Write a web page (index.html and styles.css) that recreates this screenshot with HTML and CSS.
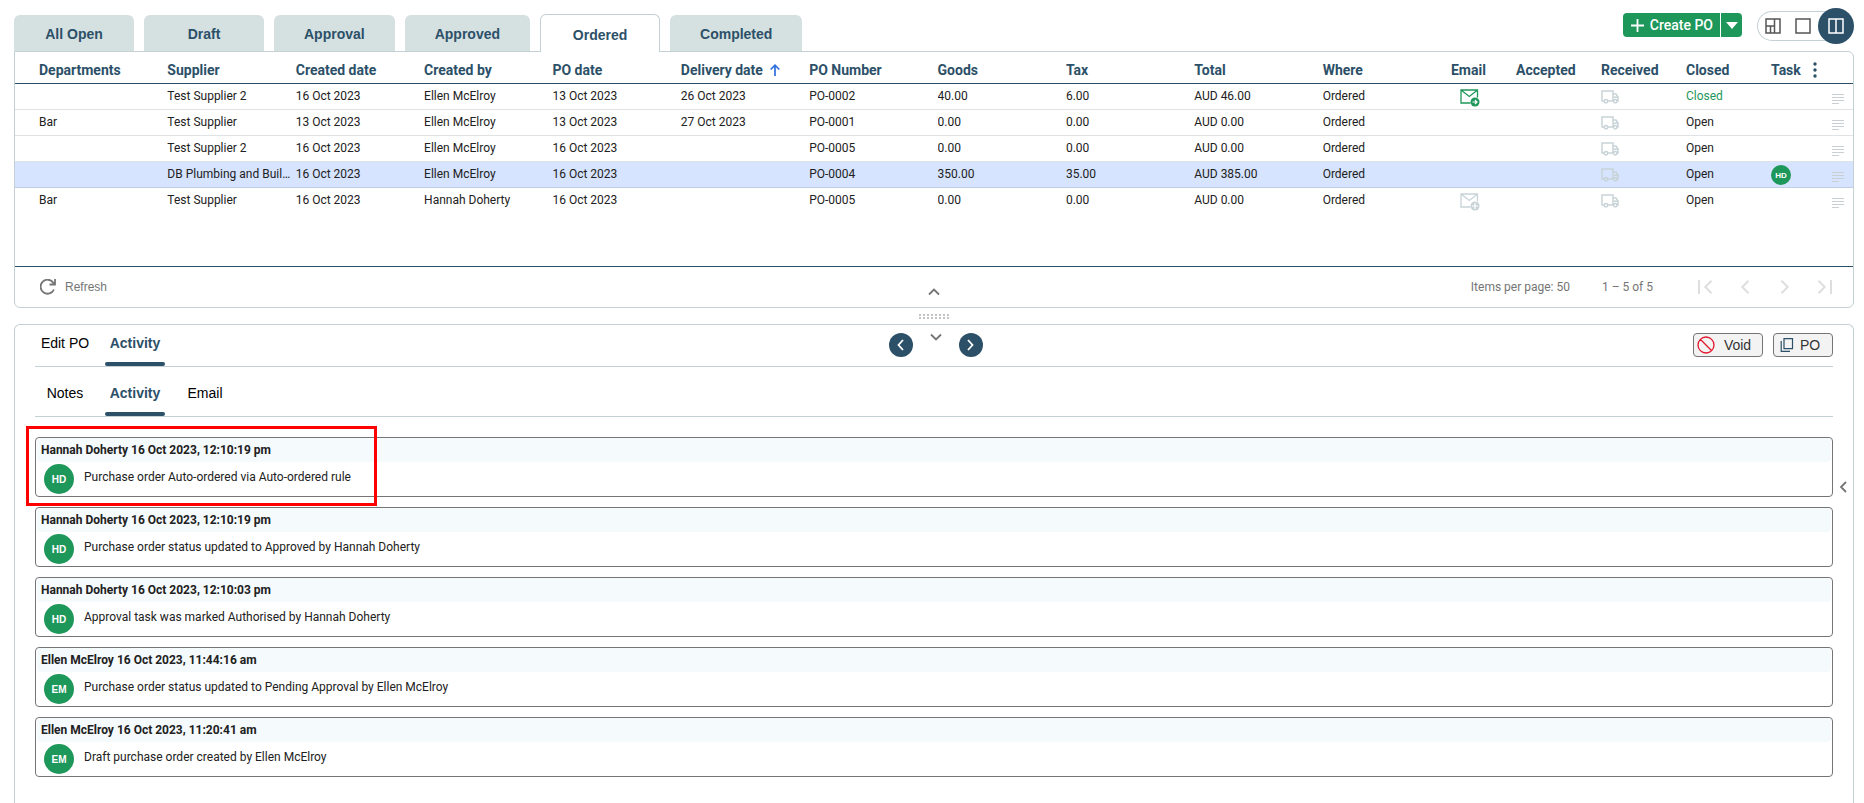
FILE: index.html
```html
<!DOCTYPE html>
<html lang="en">
<head>
  <meta charset="UTF-8">
  <meta name="viewport" content="width=device-width, initial-scale=1.0">
  <title>Purchase Orders</title>
  <link rel="stylesheet" href="styles.css">
</head>
<body>
  <svg class="sprite" aria-hidden="true">
    <symbol id="truck" viewBox="0 0 18 14">
      <path d="M3 11H1V1h11v10H7M12 4h3l2 3v4h-1M12 11h1" fill="none" stroke="currentColor" stroke-width="1.500"/>
      <circle cx="5" cy="11.300" r="1.700" fill="none" stroke="currentColor" stroke-width="1.500"/>
      <circle cx="14.300" cy="11.300" r="1.700" fill="none" stroke="currentColor" stroke-width="1.500"/>
      <path d="M12.500 7.200h4.600" fill="none" stroke="currentColor" stroke-width="1.500"/>
    </symbol>
    <symbol id="mail" viewBox="0 0 20 18">
      <path d="M10.500 14H1V1h16.500v7.500M1 1l8.300 6.500L17.500 1" fill="none" stroke="currentColor" stroke-width="1.300"/>
      <circle cx="15" cy="13" r="4.500" fill="currentColor"/>
    </symbol>
    <symbol id="lines" viewBox="0 0 12 12">
      <path d="M0 1.500h12M0 4.500h12M0 7.500h12M0 10.500h7" fill="none" stroke="currentColor"/>
    </symbol>
    <symbol id="chevron" viewBox="0 0 12 8">
      <path d="M1 6.500L6 1.500l5 5" fill="none" stroke="currentColor" stroke-width="1.800"/>
    </symbol>
  </svg>

  <header class="topbar">
    <div class="tabs" role="tablist">
      <button class="tab" role="tab">All Open</button>
      <button class="tab" role="tab">Draft</button>
      <button class="tab" role="tab">Approval</button>
      <button class="tab" role="tab">Approved</button>
      <button class="tab active" role="tab" aria-selected="true">Ordered</button>
      <button class="tab" role="tab">Completed</button>
    </div>
    <div class="actions">
      <div class="create">
        <button class="create-main">
          <svg width="13" height="13" viewBox="0 0 13 13"><path d="M6.500 0v13M0 6.500h13" stroke="#fff" stroke-width="1.800"/></svg>
          Create PO
        </button>
        <button class="create-more" aria-label="More create options">
          <svg width="12" height="7" viewBox="0 0 12 7"><path d="M0 0h12L6 7z" fill="#fff"/></svg>
        </button>
      </div>
      <div class="views">
        <button aria-label="Grid view">
          <svg width="16" height="16" viewBox="0 0 16 16"><path d="M1 1h14v14H1zM9.500 1v14M1 8h8.500M5.500 8v7" fill="none" stroke="currentColor" stroke-width="1.500"/></svg>
        </button>
        <button aria-label="Single view">
          <svg width="16" height="16" viewBox="0 0 16 16"><path d="M1 1h14v14H1z" fill="none" stroke="currentColor" stroke-width="1.500"/></svg>
        </button>
        <button class="active" aria-label="Split view">
          <svg width="16" height="16" viewBox="0 0 16 16"><path d="M1 1h14v14H1zM8 1v14" fill="none" stroke="currentColor" stroke-width="1.500"/></svg>
        </button>
      </div>
    </div>
  </header>

  <section class="panel orders">
    <table>
      <thead>
        <tr>
          <th>Departments</th>
          <th>Supplier</th>
          <th>Created date</th>
          <th>Created by</th>
          <th>PO date</th>
          <th>Delivery date <svg class="sort" width="10" height="12" viewBox="0 0 10 12"><path d="M5 12V1.500M.7 5.500L5 1.200l4.300 4.300" fill="none" stroke="currentColor" stroke-width="1.700"/></svg></th>
          <th>PO Number</th>
          <th>Goods</th>
          <th>Tax</th>
          <th>Total</th>
          <th>Where</th>
          <th>Email</th>
          <th>Accepted</th>
          <th>Received</th>
          <th>Closed</th>
          <th>Task</th>
          <th>
            <button class="icon-btn columns-menu" aria-label="Columns">
              <svg width="4" height="16" viewBox="0 0 4 16"><g fill="currentColor"><circle cx="2" cy="2" r="1.700"/><circle cx="2" cy="8" r="1.700"/><circle cx="2" cy="14" r="1.700"/></g></svg>
            </button>
          </th>
        </tr>
      </thead>
      <tbody>
        <tr>
          <td></td>
          <td>Test Supplier 2</td>
          <td>16 Oct 2023</td>
          <td>Ellen McElroy</td>
          <td>13 Oct 2023</td>
          <td>26 Oct 2023</td>
          <td>PO-0002</td>
          <td>40.00</td>
          <td>6.00</td>
          <td>AUD 46.00</td>
          <td>Ordered</td>
          <td class="mail sent"><svg width="20" height="18" viewBox="0 0 20 18"><use href="#mail"/><path d="M12.500 13h4M15 11l2 2-2 2" fill="none" stroke="#fff" stroke-width="1.200"/></svg></td>
          <td></td>
          <td class="received"><svg width="18" height="14"><use href="#truck"/></svg></td>
          <td class="closed">Closed</td>
          <td></td>
          <td class="row-menu"><button class="icon-btn" aria-label="Details"><svg width="12" height="12"><use href="#lines"/></svg></button></td>
        </tr>
        <tr>
          <td>Bar</td>
          <td>Test Supplier</td>
          <td>13 Oct 2023</td>
          <td>Ellen McElroy</td>
          <td>13 Oct 2023</td>
          <td>27 Oct 2023</td>
          <td>PO-0001</td>
          <td>0.00</td>
          <td>0.00</td>
          <td>AUD 0.00</td>
          <td>Ordered</td>
          <td></td>
          <td></td>
          <td class="received"><svg width="18" height="14"><use href="#truck"/></svg></td>
          <td>Open</td>
          <td></td>
          <td class="row-menu"><button class="icon-btn" aria-label="Details"><svg width="12" height="12"><use href="#lines"/></svg></button></td>
        </tr>
        <tr>
          <td></td>
          <td>Test Supplier 2</td>
          <td>16 Oct 2023</td>
          <td>Ellen McElroy</td>
          <td>16 Oct 2023</td>
          <td></td>
          <td>PO-0005</td>
          <td>0.00</td>
          <td>0.00</td>
          <td>AUD 0.00</td>
          <td>Ordered</td>
          <td></td>
          <td></td>
          <td class="received"><svg width="18" height="14"><use href="#truck"/></svg></td>
          <td>Open</td>
          <td></td>
          <td class="row-menu"><button class="icon-btn" aria-label="Details"><svg width="12" height="12"><use href="#lines"/></svg></button></td>
        </tr>
        <tr class="selected">
          <td></td>
          <td>DB Plumbing and Buil…</td>
          <td>16 Oct 2023</td>
          <td>Ellen McElroy</td>
          <td>16 Oct 2023</td>
          <td></td>
          <td>PO-0004</td>
          <td>350.00</td>
          <td>35.00</td>
          <td>AUD 385.00</td>
          <td>Ordered</td>
          <td></td>
          <td></td>
          <td class="received"><svg width="18" height="14"><use href="#truck"/></svg></td>
          <td>Open</td>
          <td class="task"><span class="avatar small">HD</span></td>
          <td class="row-menu"><button class="icon-btn" aria-label="Details"><svg width="12" height="12"><use href="#lines"/></svg></button></td>
        </tr>
        <tr>
          <td>Bar</td>
          <td>Test Supplier</td>
          <td>16 Oct 2023</td>
          <td>Hannah Doherty</td>
          <td>16 Oct 2023</td>
          <td></td>
          <td>PO-0005</td>
          <td>0.00</td>
          <td>0.00</td>
          <td>AUD 0.00</td>
          <td>Ordered</td>
          <td class="mail"><svg width="20" height="18" viewBox="0 0 20 18"><use href="#mail"/><path d="M12 13h6M15 10v6" fill="none" stroke="#fff" stroke-width="1.200"/></svg></td>
          <td></td>
          <td class="received"><svg width="18" height="14"><use href="#truck"/></svg></td>
          <td>Open</td>
          <td></td>
          <td class="row-menu"><button class="icon-btn" aria-label="Details"><svg width="12" height="12"><use href="#lines"/></svg></button></td>
        </tr>
      </tbody>
    </table>

    <footer class="orders-footer">
      <button class="refresh">
        <svg width="16" height="16" viewBox="0 0 16 16"><path d="M14 10.500A7 7 0 1 1 13.300 3.700L15 5.500M15 0v5.500H9.500" fill="none" stroke="currentColor" stroke-width="1.800"/></svg>
        Refresh
      </button>
      <button class="icon-btn collapse" aria-label="Collapse list"><svg width="12" height="8"><use href="#chevron"/></svg></button>
      <div class="pager">
        <span>Items per page: 50</span>
        <span class="range">1 – 5 of 5</span>
        <button aria-label="First page" disabled><svg width="16" height="14" viewBox="0 0 16 14"><path d="M2 0v14M14.500 .8L8.300 7l6.200 6.200" fill="none" stroke="currentColor" stroke-width="2"/></svg></button>
        <button aria-label="Previous page" disabled><svg width="10" height="14" viewBox="0 0 10 14"><path d="M8.500 .8L2.300 7l6.200 6.200" fill="none" stroke="currentColor" stroke-width="2"/></svg></button>
        <button aria-label="Next page" disabled><svg width="10" height="14" viewBox="0 0 10 14"><path d="M1.500 .8L7.700 7l-6.200 6.200" fill="none" stroke="currentColor" stroke-width="2"/></svg></button>
        <button aria-label="Last page" disabled><svg width="16" height="14" viewBox="0 0 16 14"><path d="M14 0v14M1.500 .8L7.700 7l-6.200 6.200" fill="none" stroke="currentColor" stroke-width="2"/></svg></button>
      </div>
    </footer>
  </section>

  <div class="splitter" role="separator">
    <svg width="30" height="5" viewBox="0 0 30 5"><path d="M0 1h30M0 4h30" stroke="#c4c4c4" stroke-width="2" stroke-dasharray="2"/></svg>
  </div>

  <section class="panel detail">
    <div class="detail-main">
      <div class="detail-bar">
        <div class="line-tabs" role="tablist">
          <button class="line-tab" role="tab">Edit PO</button>
          <button class="line-tab active" role="tab" aria-selected="true">Activity</button>
        </div>
        <div class="record-nav">
          <button class="round" aria-label="Previous order"><svg width="7" height="12" viewBox="0 0 7 12"><path d="M6 1L1.500 6 6 11" fill="none" stroke="#fff" stroke-width="1.800"/></svg></button>
          <button class="icon-btn expand" aria-label="Expand list"><svg class="flip" width="12" height="8"><use href="#chevron"/></svg></button>
          <button class="round" aria-label="Next order"><svg width="7" height="12" viewBox="0 0 7 12"><path d="M1 1l4.500 5L1 11" fill="none" stroke="#fff" stroke-width="1.800"/></svg></button>
        </div>
        <div class="record-actions">
          <button class="outlined void">
            <svg width="18" height="18" viewBox="0 0 18 18"><path d="M9 1a8 8 0 1 0 0 16A8 8 0 1 0 9 1zM3.300 3.300l11.400 11.400" fill="none" stroke="#e3172d" stroke-width="1.300"/></svg>
            Void
          </button>
          <button class="outlined po">
            <svg width="14" height="14" viewBox="0 0 14 14"><path d="M4 .7h8.500v10H4zM1.200 3v10.300H10" fill="none" stroke="#2c5068" stroke-width="1.200"/></svg>
            PO
          </button>
        </div>
      </div>

      <div class="line-tabs sub-tabs" role="tablist">
        <button class="line-tab" role="tab">Notes</button>
        <button class="line-tab active" role="tab" aria-selected="true">Activity</button>
        <button class="line-tab" role="tab">Email</button>
      </div>

      <div class="feed">
        <article class="entry marked">
          <h3>Hannah Doherty 16 Oct 2023, 12:10:19 pm</h3>
          <div class="entry-body"><span class="avatar">HD</span><p>Purchase order Auto-ordered via Auto-ordered rule</p></div>
        </article>
        <article class="entry">
          <h3>Hannah Doherty 16 Oct 2023, 12:10:19 pm</h3>
          <div class="entry-body"><span class="avatar">HD</span><p>Purchase order status updated to Approved by Hannah Doherty</p></div>
        </article>
        <article class="entry">
          <h3>Hannah Doherty 16 Oct 2023, 12:10:03 pm</h3>
          <div class="entry-body"><span class="avatar">HD</span><p>Approval task was marked Authorised by Hannah Doherty</p></div>
        </article>
        <article class="entry">
          <h3>Ellen McElroy 16 Oct 2023, 11:44:16 am</h3>
          <div class="entry-body"><span class="avatar">EM</span><p>Purchase order status updated to Pending Approval by Ellen McElroy</p></div>
        </article>
        <article class="entry">
          <h3>Ellen McElroy 16 Oct 2023, 11:20:41 am</h3>
          <div class="entry-body"><span class="avatar">EM</span><p>Draft purchase order created by Ellen McElroy</p></div>
        </article>
      </div>
    </div>
    <button class="icon-btn side-toggle" aria-label="Open side panel"><svg width="8" height="12" viewBox="0 0 8 12"><path d="M7 1L2 6l5 5" fill="none" stroke="currentColor" stroke-width="1.800"/></svg></button>
  </section>
</body>
</html>
```
FILE: styles.css
```css
*,
*::after {
  box-sizing: border-box;
}
body {
  display: flex;
  flex-direction: column;
  height: 100vh;
  margin: 0;
  padding: 0 10px 0 14px;
  overflow: hidden;
  background: #fff;
  color: #212121;
  font-family: Roboto, sans-serif;
  font-size: 12px;
}
button {
  display: flex;
  align-items: center;
  justify-content: center;
  margin: 0;
  padding: 0;
  border: none;
  background: none;
  color: inherit;
  font-family: "Liberation Sans", Arial, sans-serif;
  font-size: 14px;
  cursor: pointer;
}
svg {
  display: block;
  flex: none;
}
.sprite {
  position: absolute;
  width: 0;
  height: 0;
}
.icon-btn {
  color: #757575;
}

/* top bar */
.topbar {
  display: flex;
  justify-content: space-between;
  align-items: flex-end;
  height: 51px;
}
.tabs {
  display: flex;
  align-items: flex-end;
  gap: 10px;
}
.tab {
  min-width: 120px;
  height: 36px;
  padding: 2px 30px 0;
  border-radius: 6px 6px 0 0;
  background: #d5e0e1;
  color: #2c5068;
  font-weight: bold;
}
.tab.active {
  height: 38px;
  margin-bottom: -1px;
  border: 1px solid #c3d0d4;
  border-bottom: none;
  background: #fff;
  z-index: 1;
}
.actions {
  display: flex;
  align-items: flex-start;
  align-self: flex-start;
  gap: 15px;
  padding-top: 8px;
}
.create {
  display: flex;
  gap: 1px;
  height: 24px;
  margin-top: 5px;
}
.create button {
  background: #1e975a;
  color: #fff;
}
.create .create-main {
  gap: 6px;
  padding: 0 7px 0 8px;
  border-radius: 4px 0 0 4px;
  font-family: Roboto, sans-serif;
  font-weight: 500;
}
.create .create-more {
  width: 21px;
  border-radius: 0 4px 4px 0;
}
.views {
  display: flex;
  align-items: center;
  gap: 14px;
  height: 30px;
  margin-top: 3px;
  padding-left: 7px;
  border: 1px solid #c3d0d4;
  border-right: none;
  border-radius: 15px;
  color: #555;
}
.views .active {
  width: 36px;
  height: 36px;
  margin-left: -7px;
  border-radius: 50%;
  background: #2c5068;
  color: #fff;
}

/* orders table */
.panel {
  border: 1px solid #c3d0d4;
  border-radius: 6px;
}
.orders {
  display: flex;
  flex-direction: column;
  height: 257px;
  border-top-left-radius: 0;
}
table,
thead,
tbody {
  display: block;
}
table {
  flex: 1;
}
tr {
  display: grid;
  grid-template-columns: repeat(11, minmax(0, 1fr)) 65px repeat(3, 85px) 40px 42px;
  padding-left: 24px;
}
thead tr {
  padding-top: 5px;
  border-bottom: 1px solid #2c5068;
}
th {
  display: flex;
  align-items: center;
  padding: 0;
  color: #2c5068;
  font-size: 14px;
  font-weight: bold;
  line-height: 26px;
  white-space: nowrap;
}
.sort {
  margin-left: 7px;
  color: #2f6fde;
}
.columns-menu {
  margin-left: 2px;
  color: #2c5068;
}
tbody tr {
  height: 26px;
  border-bottom: 1px solid #dfe3e5;
}
tbody tr:last-child {
  border-bottom: none;
}
tbody tr.selected {
  border-bottom-color: #c3cde3;
  background: #d6e4ff;
}
td {
  padding: 0 4px 0 0;
  overflow: hidden;
  line-height: 25px;
  text-overflow: ellipsis;
  white-space: nowrap;
}
td.closed {
  color: #1e975a;
}
td.mail {
  padding: 5px 0 0 9px;
  color: #c8d3d8;
}
td.sent {
  color: #1e975a;
}
td.received {
  padding-top: 6px;
  color: #c8d3d8;
}
td.task {
  padding-top: 3px;
}
td.row-menu {
  padding: 9px 0 0 21px;
}
.row-menu .icon-btn {
  color: #c8d0d4;
}

.orders-footer {
  display: grid;
  grid-template-columns: 1fr auto 1fr;
  align-items: center;
  height: 41px;
  padding: 0 8px;
  border-top: 1px solid #2c5068;
  color: #757575;
}
.refresh {
  justify-self: start;
  gap: 9px;
  padding-left: 17px;
  font-size: 12px;
}
.collapse {
  padding-top: 10px;
}
.pager {
  display: flex;
  align-items: center;
  justify-self: end;
}
.pager button {
  width: 40px;
  height: 40px;
  color: #dedede;
}
.range {
  margin: 0 32px;
}

.splitter {
  display: flex;
  align-items: center;
  justify-content: center;
  height: 16px;
}

/* detail panel */
.detail {
  display: flex;
  flex: 1;
  padding-left: 20px;
  border-bottom: none;
  border-radius: 6px 6px 0 0;
}
.detail-main {
  flex: 1;
}
.detail-bar {
  display: grid;
  grid-template-columns: 1fr auto 1fr;
  border-bottom: 1px solid #c3d0d4;
}
.line-tabs {
  display: flex;
  gap: 10px;
}
.line-tab {
  flex-direction: column;
  min-width: 60px;
  padding-top: 8px;
  color: #000;
  line-height: 20px;
}
.line-tab::after {
  content: "";
  align-self: stretch;
  height: 4px;
  margin-top: 9px;
  border-radius: 2px;
}
.line-tab.active {
  color: #2c5068;
  font-weight: bold;
}
.line-tab.active::after {
  background: #2c5068;
}
.sub-tabs {
  padding-top: 8px;
  border-bottom: 1px solid #c3d0d4;
}
.record-nav,
.record-actions {
  display: flex;
  align-items: flex-start;
  padding-top: 8px;
}
.record-nav {
  gap: 17px;
  padding-left: 3px;
}
.round {
  width: 24px;
  height: 24px;
  border-radius: 50%;
  background: #2c5068;
}
.flip {
  transform: rotate(180deg);
}
.record-actions {
  justify-self: end;
  gap: 10px;
}
.outlined {
  height: 24px;
  border: 1px solid #757575;
  border-radius: 4px;
  background: #f3f3f3;
  color: #333;
}
.void {
  gap: 9px;
  width: 70px;
  padding-right: 8px;
}
.po {
  gap: 6px;
  width: 60px;
  padding-right: 6px;
}
.side-toggle {
  align-self: flex-start;
  width: 20px;
  margin-top: 156px;
}

/* activity feed */
.feed {
  display: grid;
  gap: 10px;
  padding-top: 20px;
}
.entry {
  position: relative;
  height: 60px;
  padding: 0 1px;
  border: 1px solid #757575;
  border-radius: 4px;
}
.entry h3 {
  margin: 0;
  padding-left: 4px;
  border-radius: 4px;
  background: #f5fafd;
  font-size: 12px;
  font-weight: bold;
  line-height: 24px;
}
.entry-body {
  display: flex;
  gap: 10px;
  padding: 2px 7px;
}
.entry p {
  margin: 0;
  line-height: 26px;
}
.marked::after {
  content: "";
  position: absolute;
  z-index: 1;
  top: -12px;
  left: -10px;
  width: 351px;
  height: 80px;
  border: 3px solid #fe0000;
}
.avatar {
  display: flex;
  align-items: center;
  justify-content: center;
  width: 30px;
  height: 30px;
  border-radius: 50%;
  background: #1e975a;
  color: #fff;
  font-family: "Liberation Sans", Arial, sans-serif;
  font-size: 10px;
  font-weight: bold;
}
.avatar.small {
  width: 20px;
  height: 20px;
  font-size: 8px;
}
```
